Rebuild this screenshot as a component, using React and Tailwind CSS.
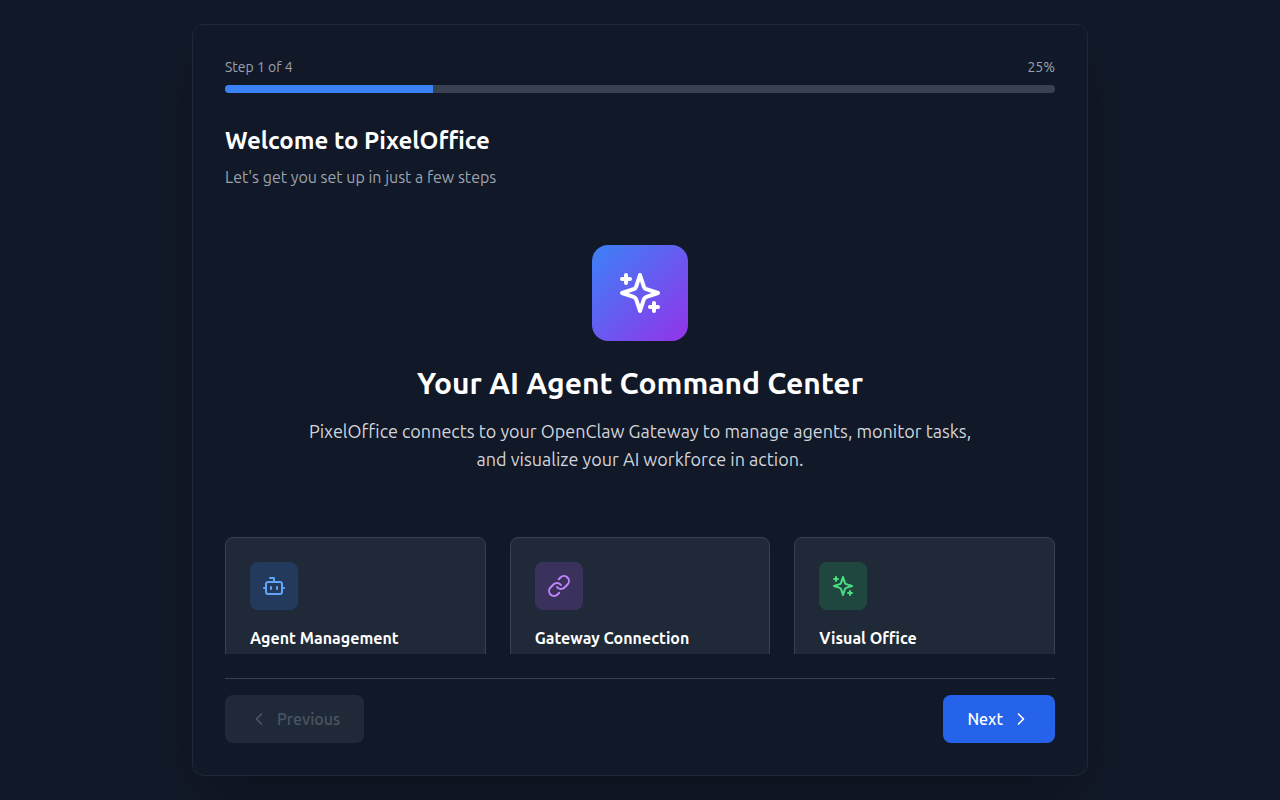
import React, { useState } from 'react';
import { Bot, ChevronLeft, ChevronRight, Link } from 'lucide-react';

const TOTAL_STEPS = 4;

const Sparkles = ({ className }) => (
  <svg
    className={className}
    viewBox="0 0 24 24"
    fill="none"
    stroke="currentColor"
    strokeWidth={2}
    strokeLinecap="round"
    strokeLinejoin="round"
    aria-hidden="true"
  >
    <path d="m12 3-1.912 5.813a2 2 0 0 1-1.275 1.275L3 12l5.813 1.912a2 2 0 0 1 1.275 1.275L12 21l1.912-5.813a2 2 0 0 1 1.275-1.275L21 12l-5.813-1.912a2 2 0 0 1-1.275-1.275L12 3Z" />
    <path d="M5 3v4" />
    <path d="M19 17v4" />
    <path d="M3 5h4" />
    <path d="M17 19h4" />
  </svg>
);

const features = [
  { icon: Bot, title: 'Agent Management', color: 'bg-[#3b82f6]/20 text-[#60a5fa]' },
  { icon: Link, title: 'Gateway Connection', color: 'bg-[#a855f7]/20 text-[#c084fc]' },
  { icon: Sparkles, title: 'Visual Office', color: 'bg-[#22c55e]/20 text-[#4ade80]' },
];

const ProgressBar = ({ step }) => {
  const percent = Math.round((step / TOTAL_STEPS) * 100);

  return (
    <div className="mb-8">
      <div className="flex justify-between mb-2 text-sm text-[#9ca3af]">
        <span>Step {step} of {TOTAL_STEPS}</span>
        <span>{percent}%</span>
      </div>
      <div className="h-2 bg-[#374151] rounded-full overflow-hidden">
        <div className="h-full bg-[#3b82f6]" style={{ width: `${percent}%` }} />
      </div>
    </div>
  );
};

const FeatureCard = ({ icon: Icon, title, color }) => (
  <div className="p-6 bg-[#1f2937] border border-[#374151] rounded-lg">
    <div className={`flex items-center justify-center w-12 h-12 mb-4 rounded-lg ${color}`}>
      <Icon className="w-6 h-6" />
    </div>
    <h3 className="font-semibold text-white">{title}</h3>
  </div>
);

const App = () => {
  const [step, setStep] = useState(1);

  return (
    <div className="flex justify-center h-screen p-6 bg-[#111827] font-['Ubuntu','Roboto',sans-serif]">
      <main className="flex flex-col w-full max-w-4xl p-8 bg-[#111827] border border-[#1f2937] rounded-xl shadow-2xl">
        <ProgressBar step={step} />

        <header className="mb-6">
          <h1 className="text-2xl font-semibold text-white">Welcome to PixelOffice</h1>
          <p className="mt-2 text-[#9ca3af]">Let's get you set up in just a few steps</p>
        </header>

        <div className="flex-1 min-h-0 overflow-y-auto [scrollbar-width:none]">
          <div className="py-8 text-center">
            <div className="inline-flex items-center justify-center w-24 h-24 mb-6 rounded-2xl bg-linear-to-br/srgb from-[#3b82f6] to-[#9333ea] text-white align-top">
              <Sparkles className="w-12 h-12" />
            </div>
            <h2 className="mb-4 text-3xl font-semibold text-white">Your AI Agent Command Center</h2>
            <p className="max-w-2xl mx-auto text-lg text-[#d1d5db]">
              PixelOffice connects to your OpenClaw Gateway to manage agents, monitor tasks, and visualize your AI workforce in action.
            </p>
          </div>
          <div className="grid grid-cols-1 md:grid-cols-3 gap-6 mt-8">
            {features.map((feature) => (
              <FeatureCard key={feature.title} {...feature} />
            ))}
          </div>
        </div>

        <footer className="flex justify-between mt-6 pt-4 border-t border-[#374151]">
          <button
            type="button"
            disabled={step === 1}
            onClick={() => setStep(step - 1)}
            className="flex items-center gap-2 px-6 py-3 rounded-lg font-medium bg-[#374151] text-white disabled:bg-[#1f2937] disabled:text-[#4b5563]"
          >
            <ChevronLeft className="w-5 h-5" />
            Previous
          </button>
          <button
            type="button"
            onClick={() => setStep(Math.min(step + 1, TOTAL_STEPS))}
            className="flex items-center gap-2 px-6 py-3 rounded-lg font-medium bg-[#2563eb] text-white"
          >
            Next
            <ChevronRight className="w-5 h-5" />
          </button>
        </footer>
      </main>
    </div>
  );
};

export default App;
